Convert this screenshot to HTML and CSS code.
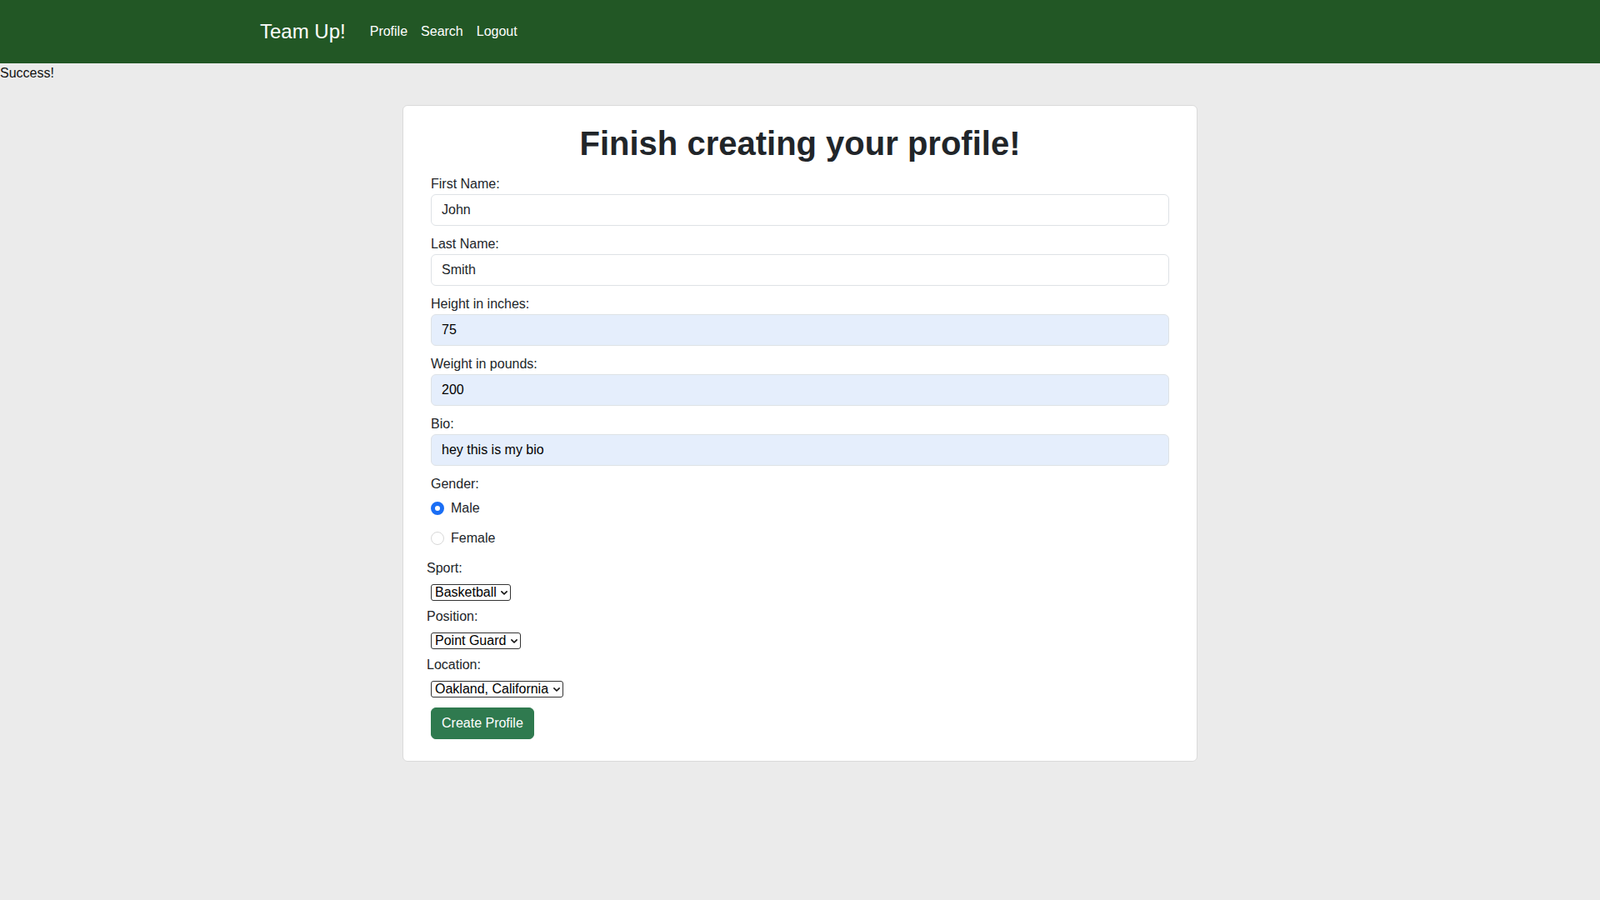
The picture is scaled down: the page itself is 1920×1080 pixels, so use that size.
FILE: index.html
```html
<!DOCTYPE html>
<html lang="en">
<head>
<meta charset="utf-8">
<title>Team Up!</title>
<link rel="stylesheet" href="styles.css">
</head>
<body>
<nav class="navbar">
  <div class="nav-inner">
    <a class="brand" href="#">Team Up!</a>
    <ul class="nav-links">
      <li><a href="#">Profile</a></li>
      <li><a href="#">Search</a></li>
      <li><a href="#">Logout</a></li>
    </ul>
  </div>
</nav>
<div class="flash">Success!</div>
<main class="card">
  <h1 class="title">Finish creating your profile!</h1>
  <form class="profile-form">
    <div class="field">
      <label class="label" for="first">First Name:</label>
      <input class="input" id="first" type="text" value="John">
    </div>
    <div class="field">
      <label class="label" for="last">Last Name:</label>
      <input class="input" id="last" type="text" value="Smith">
    </div>
    <div class="field">
      <label class="label" for="height">Height in inches:</label>
      <input class="input input-filled" id="height" type="text" value="75">
    </div>
    <div class="field">
      <label class="label" for="weight">Weight in pounds:</label>
      <input class="input input-filled" id="weight" type="text" value="200">
    </div>
    <div class="field">
      <label class="label" for="bio">Bio:</label>
      <input class="input input-filled" id="bio" type="text" value="hey this is my bio">
    </div>
    <div class="label">Gender:</div>
    <div class="radio-group">
      <label class="radio-row"><input class="radio" type="radio" name="gender" checked><span>Male</span></label>
      <label class="radio-row"><input class="radio" type="radio" name="gender"><span>Female</span></label>
    </div>
    <label class="label label-out" for="sport">Sport:</label>
    <div class="select-row">
      <span class="select-box">
        <select class="select" id="sport"><option>Basketball</option></select>
        <svg class="chev" viewBox="0 0 8 5" width="8" height="5"><path d="M0.9 0.9 L4 4 L7.1 0.9" fill="none" stroke="#111" stroke-width="1.6" stroke-linecap="round" stroke-linejoin="round"/></svg>
      </span>
    </div>
    <label class="label label-out" for="position">Position:</label>
    <div class="select-row">
      <span class="select-box">
        <select class="select" id="position"><option>Point Guard</option></select>
        <svg class="chev" viewBox="0 0 8 5" width="8" height="5"><path d="M0.9 0.9 L4 4 L7.1 0.9" fill="none" stroke="#111" stroke-width="1.6" stroke-linecap="round" stroke-linejoin="round"/></svg>
      </span>
    </div>
    <label class="label label-out" for="location">Location:</label>
    <div class="select-row">
      <span class="select-box">
        <select class="select" id="location"><option>Oakland, California</option></select>
        <svg class="chev" viewBox="0 0 8 5" width="8" height="5"><path d="M0.9 0.9 L4 4 L7.1 0.9" fill="none" stroke="#111" stroke-width="1.6" stroke-linecap="round" stroke-linejoin="round"/></svg>
      </span>
    </div>
    <button class="btn" type="button">Create Profile</button>
  </form>
</main>
</body>
</html>
```

FILE: styles.css
```css
* { box-sizing: border-box; }

body {
  margin: 0;
  background: #ebebeb;
  font-family: "Liberation Sans", Arial, sans-serif;
  font-size: 16px;
  line-height: 24px;
  color: #212529;
}

.navbar {
  background: #225725;
  height: 76px;
}

.nav-inner {
  width: 1320px;
  margin: 0 auto;
  padding: 0 12px;
  height: 100%;
  display: flex;
  align-items: center;
}

.brand {
  color: #fff;
  text-decoration: none;
  font-size: 24px;
  line-height: 30px;
  margin-right: 29px;
}

.nav-links {
  list-style: none;
  margin: 0;
  padding: 0;
  display: flex;
  gap: 16px;
}

.nav-links a {
  color: #fff;
  text-decoration: none;
  font-size: 16px;
}

.flash {
  color: #111;
  height: 24px;
}

.card {
  width: 954px;
  margin: 26px auto 0;
  background: #fff;
  border: 1px solid #dadada;
  border-radius: 6px;
  padding: 21px 33px 26px 33px;
}

.title {
  margin: 0 0 13px;
  font-size: 40px;
  line-height: 48px;
  font-weight: 700;
  text-align: center;
  color: #212529;
}

.field {
  margin-bottom: 10px;
}

.label {
  display: block;
  height: 24px;
}

.label-out {
  margin-left: -5px;
}

.input {
  display: block;
  width: 100%;
  height: 38px;
  margin: 0;
  padding: 6px 12px;
  font: inherit;
  font-size: 16px;
  line-height: 24px;
  color: #212529;
  background: #fff;
  border: 1px solid #dee2e6;
  border-radius: 6px;
  outline: none;
}

.input-filled {
  background: #e5eefc;
  color: #000;
}

.radio-group {
  margin-top: 5px;
}

.radio-row {
  display: flex;
  align-items: center;
  gap: 8px;
  height: 24px;
  margin-bottom: 12px;
}

.radio {
  appearance: none;
  -webkit-appearance: none;
  width: 16px;
  height: 16px;
  margin: 0;
  border-radius: 50%;
  border: 1px solid #d8d8d8;
  background: #fff;
  flex: none;
}

.radio:checked {
  border: 5px solid #1a6ef5;
  background: #fff;
}

.select-row {
  display: flex;
  margin: 7px 0;
  height: 20px;
}

.select-box {
  position: relative;
  display: inline-block;
  height: 20px;
}

.select {
  appearance: none;
  -webkit-appearance: none;
  display: block;
  height: 20px;
  margin: 0;
  padding: 0 16px 0 4px;
  font-family: "Liberation Sans", Arial, sans-serif;
  font-size: 16px;
  line-height: 18px;
  color: #000;
  background: #fff;
  border: 1px solid #333;
  border-radius: 3px;
}

.chev {
  position: absolute;
  right: 4px;
  top: 8px;
  pointer-events: none;
}

.btn {
  display: block;
  margin-top: 12px;
  height: 38px;
  padding: 6px 12px;
  font-family: "Liberation Sans", Arial, sans-serif;
  font-size: 16px;
  line-height: 24px;
  color: #fff;
  background: #2f7a4f;
  border: 1px solid #2f7a4f;
  border-radius: 6px;
}
```
